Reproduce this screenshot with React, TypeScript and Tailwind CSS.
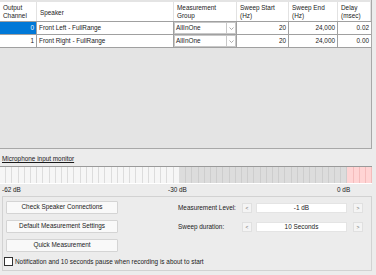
import React from 'react'

const cols = [
  { w: 'w-[37px]', head: ['Output', 'Channel'] },
  { w: 'w-[137px]', head: ['Speaker'] },
  { w: 'w-[63px]', head: ['Measurement', 'Group'] },
  { w: 'w-[52px]', head: ['Sweep Start', '(Hz)'] },
  { w: 'w-[49px]', head: ['Sweep End', '(Hz)'] },
  { w: 'w-[33px]', head: ['Delay', '(msec)'] },
]

const rows = [
  { ch: '0', speaker: 'Front Left - FullRange', group: 'AllInOne', start: '20', end: '24,000', delay: '0.02' },
  { ch: '1', speaker: 'Front Right - FullRange', group: 'AllInOne', start: '20', end: '24,000', delay: '0.00' },
]

const segments = Array.from({ length: 60 }, (_, i) => i)

function Spin({ value }: { value: string }) {
  return (
    <div className="flex items-center">
      <button className="w-[10px] h-[10px] bg-[#f4f4f4] border border-[#e0e0e0] text-[5px] leading-none text-[#666] flex items-center justify-center">
        &lt;
      </button>
      <div className="ml-[4px] w-[91px] h-[10px] bg-white border border-[#e4e4e4] flex items-center justify-center">
        {value}
      </div>
      <button className="ml-[6px] w-[10px] h-[10px] bg-[#f4f4f4] border border-[#e0e0e0] text-[5px] leading-none text-[#666] flex items-center justify-center">
        &gt;
      </button>
    </div>
  )
}

function WinButton({ label }: { label: string }) {
  return (
    <button className="w-[112px] h-[13px] bg-[#f9f9f9] border border-[#d4d4d4] rounded-[1px] text-[#222] leading-none">
      {label}
    </button>
  )
}

export default function App() {
  return (
    <div className="w-[376px] h-[275px] overflow-hidden bg-[#ececec] text-[#1a1a1a] text-[6.4px] leading-[8px] font-['Liberation_Sans',Arial,sans-serif]">
      {/* Grid */}
      <div className="w-[372px] h-[149px] pt-[2px] bg-[#e4e4e4] border-r border-b border-[#a8a8a8]">
        <div className="flex h-[20px] bg-white border-b border-[#a0a0a0]">
          {cols.map((c, i) => (
            <div key={i} className={`${c.w} shrink-0 px-[3px] pt-[2px] border-r border-[#e2e2e2] flex flex-col ${c.head.length === 1 ? 'justify-center pt-0' : ''}`}>
              {c.head.map((h) => (
                <span key={h}>{h}</span>
              ))}
            </div>
          ))}
        </div>
        {rows.map((r, i) => (
          <div key={i} className="flex h-[13px] bg-white border-b border-[#a0a0a0]">
            <div className={`w-[37px] shrink-0 border-r border-[#a0a0a0] flex items-center justify-end pr-[2px] ${i === 0 ? 'bg-[#0078d7] text-white' : ''}`}>
              {r.ch}
            </div>
            <div className="w-[137px] shrink-0 border-r border-[#a0a0a0] flex items-center pl-[2px]">{r.speaker}</div>
            <div className="w-[63px] shrink-0 border-r border-[#a0a0a0] flex items-center">
              <div className="flex-1 h-full border border-[#c8c8c8] flex items-center pl-[1px]">{r.group}</div>
              <div className="w-[9px] h-full border-y border-r border-[#c8c8c8] flex items-center justify-center">
                <svg width="5" height="3" viewBox="0 0 5 3">
                  <path d="M0.5 0.5 L2.5 2.5 L4.5 0.5" fill="none" stroke="#8a8a8a" strokeWidth="0.7" />
                </svg>
              </div>
            </div>
            <div className="w-[52px] shrink-0 border-r border-[#a0a0a0] flex items-center justify-end pr-[2px]">{r.start}</div>
            <div className="w-[49px] shrink-0 border-r border-[#a0a0a0] flex items-center justify-end pr-[2px]">{r.end}</div>
            <div className="w-[33px] shrink-0 flex items-center justify-end pr-[2px]">{r.delay}</div>
          </div>
        ))}
      </div>

      {/* Microphone monitor */}
      <div className="pl-[2px] pt-[6px] h-[17px]">
        <span className="underline">Microphone input monitor</span>
      </div>
      <div className="w-[372px] h-[18px] flex border-t border-[#9a9a9a] border-b border-b-white">
        {segments.map((i) => (
          <div
            key={i}
            className={`flex-1 border-r ${
              i < 29
                ? 'bg-[#f6f6f6] border-[#dcdcdc]'
                : i < 56
                ? 'bg-[#dcdcdc] border-[#cdcdcd]'
                : 'bg-[#ffd4d4] border-[#f4bcbc]'
            }`}
          />
        ))}
      </div>
      <div className="relative h-[12px] w-[372px]">
        <span className="absolute left-[2px] top-[2px]">-62 dB</span>
        <span className="absolute left-[168px] top-[2px]">-30 dB</span>
        <span className="absolute left-[337px] top-[2px]">0 dB</span>
      </div>

      {/* Controls group */}
      <div className="ml-[2px] w-[370px] h-[75px] border border-[#d2d2d2] flex flex-col">
        <div className="flex pt-[4px] pl-[3px]">
          <div className="flex flex-col gap-[6px]">
            <WinButton label="Check Speaker Connections" />
            <WinButton label="Default Measurement Settings" />
            <WinButton label="Quick Measurement" />
          </div>
          <div className="ml-[60px] flex flex-col gap-[9px] pt-[2px]">
            <div className="flex items-center">
              <span className="w-[64px]">Measurement Level:</span>
              <Spin value="-1 dB" />
            </div>
            <div className="flex items-center">
              <span className="w-[64px]">Sweep duration:</span>
              <Spin value="10 Seconds" />
            </div>
          </div>
        </div>
        <div className="flex items-center mt-[5px] pl-[1px]">
          <div className="w-[9px] h-[9px] bg-white border border-[#333]" />
          <span className="ml-[2px]">Notification and 10 seconds pause when recording is about to start</span>
        </div>
      </div>
    </div>
  )
}
